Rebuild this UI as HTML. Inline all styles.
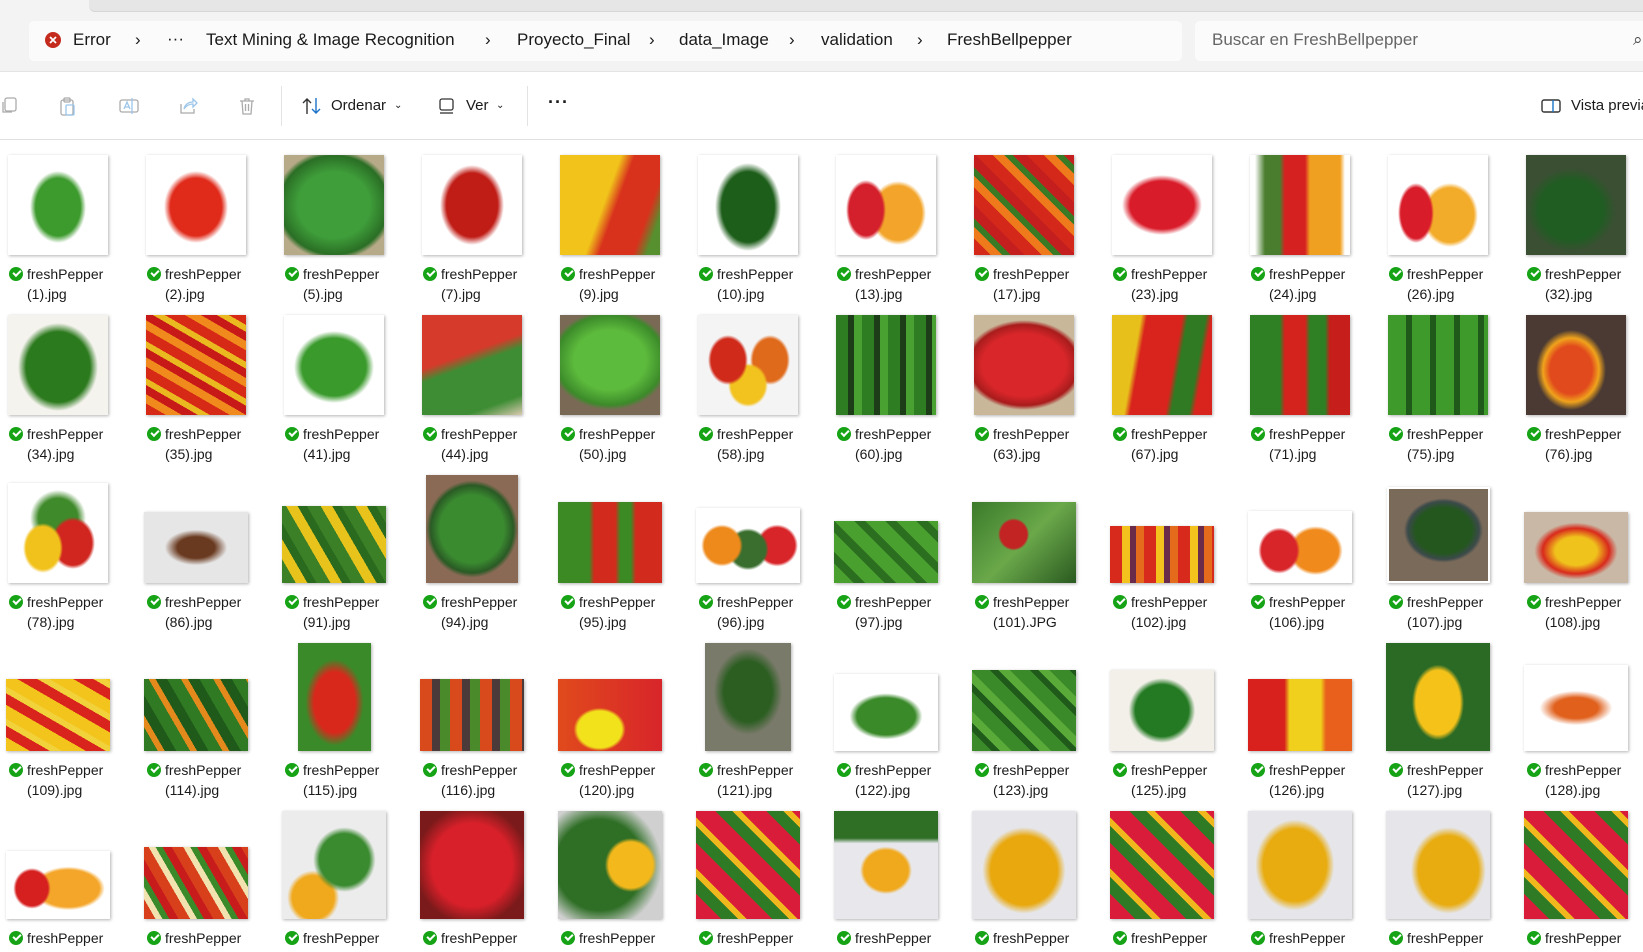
<!DOCTYPE html>
<html><head><meta charset="utf-8">
<style>
*{margin:0;padding:0;box-sizing:border-box}
body{width:1643px;height:952px;overflow:hidden;background:#fff;font-family:"Liberation Sans",sans-serif;color:#1a1a1a;position:relative}
.hdr{position:absolute;left:0;top:0;width:1643px;height:72px;background:#f3f3f3;border-bottom:1px solid #e3e3e3}
.band{position:absolute;left:89px;top:0;width:1560px;height:12px;background:#e6e6e6;border-bottom-left-radius:6px;border-bottom:1px solid #d6d6d6}
.bc{position:absolute;left:29px;top:21px;width:1153px;height:40px;background:#fbfbfb;border-radius:5px}
.sr{position:absolute;left:1195px;top:21px;width:460px;height:40px;background:#fbfbfb;border-radius:5px}
.t{position:absolute;font-size:17px;top:30px;white-space:nowrap}
.tb{position:absolute;left:0;top:72px;width:1643px;height:68px;border-bottom:1px solid #e0e0e0;background:#fff}
.tt{position:absolute;font-size:15px;top:25px;white-space:nowrap}
.sep{position:absolute;top:14px;width:1px;height:40px;background:#e3e3e3}
.grid{position:absolute;left:0;top:0;width:1643px;height:946px;overflow:hidden}
.c{position:absolute;width:104px}
.th{height:108px;display:flex;align-items:flex-end;justify-content:center}
.th i{display:block;box-shadow:1px 1px 3px rgba(0,0,0,.3)}
.c p{font-size:14px;line-height:20px;padding-left:21px;position:relative;margin-top:9px;white-space:nowrap}
.c p:before{content:"";position:absolute;left:3px;top:3px;width:14px;height:14px;border-radius:50%;background:#16a316}
.c p:after{content:"";position:absolute;left:7px;top:6px;width:6px;height:3px;border-left:2px solid #fff;border-bottom:2px solid #fff;transform:rotate(-45deg)}
</style></head><body>
<div class="hdr"><div class="band"></div><div class="bc"></div><div class="sr"></div>
<svg style="position:absolute;left:44px;top:31px" width="18" height="18"><circle cx="9" cy="9" r="8" fill="#c42b1c"/><path d="M6 6l6 6M12 6l-6 6" stroke="#fff" stroke-width="1.8"/></svg>
<span class="t" style="left:73px">Error</span>
<span class="t" style="left:135px">›</span>
<span class="t" style="left:167px;top:29px">···</span>
<span class="t" style="left:206px">Text Mining &amp; Image Recognition</span>
<span class="t" style="left:485px">›</span>
<span class="t" style="left:517px">Proyecto_Final</span>
<span class="t" style="left:649px">›</span>
<span class="t" style="left:679px">data_Image</span>
<span class="t" style="left:789px">›</span>
<span class="t" style="left:821px">validation</span>
<span class="t" style="left:917px">›</span>
<span class="t" style="left:947px">FreshBellpepper</span>
<span class="t" style="left:1212px;color:#666">Buscar en FreshBellpepper</span>
<span class="t" style="left:1633px;color:#444">⌕</span>
</div>
<div class="tb">
<svg style="position:absolute;left:0;top:24px" width="20" height="20" fill="none" stroke="#aaa" stroke-width="1.3"><rect x="5" y="2" width="11" height="13" rx="2"/><path d="M3 6v10h9"/></svg>
<svg style="position:absolute;left:58px;top:24px" width="20" height="20" fill="none" stroke="#aaa" stroke-width="1.3"><rect x="3" y="4" width="12" height="15" rx="2"/><rect x="6" y="2" width="6" height="4" rx="1"/><rect x="8" y="9" width="8" height="10" rx="1" stroke="#9cc6ea"/></svg>
<svg style="position:absolute;left:118px;top:24px" width="22" height="20" fill="none" stroke="#aaa" stroke-width="1.3"><rect x="2" y="4" width="18" height="12" rx="2"/><path d="M6 13l3-7 3 7M7 11h4" stroke="#9cc6ea"/><path d="M14 2v16" stroke="#9cc6ea"/></svg>
<svg style="position:absolute;left:178px;top:24px" width="20" height="20" fill="none" stroke="#aaa" stroke-width="1.3"><path d="M3 8v9h13v-4"/><path d="M6 13c1-5 5-7 9-7V3l4 4-4 4V8c-4 0-7 2-9 5z" stroke="#9cc6ea"/></svg>
<svg style="position:absolute;left:237px;top:24px" width="20" height="20" fill="none" stroke="#aaa" stroke-width="1.3"><path d="M3 5h14M8 5V3h4v2M5 5l1 13h8l1-13M8.5 8v7M11.5 8v7"/></svg>
<div class="sep" style="left:281px"></div>
<svg style="position:absolute;left:301px;top:24px" width="22" height="20" fill="none" stroke-width="1.4"><path d="M6 18V3M2 7l4-4 4 4" stroke="#333"/><path d="M15 2v15M11 13l4 4 4-4" stroke="#1a73c8"/></svg>
<span class="tt" style="left:331px">Ordenar</span>
<span class="tt" style="left:394px;font-size:10px;top:28px">⌄</span>
<svg style="position:absolute;left:438px;top:24px" width="18" height="20" fill="none" stroke="#333" stroke-width="1.3"><rect x="2" y="3" width="13" height="11" rx="2"/><path d="M2 17h13"/></svg>
<span class="tt" style="left:466px">Ver</span>
<span class="tt" style="left:496px;font-size:10px;top:28px">⌄</span>
<div class="sep" style="left:527px"></div>
<span class="tt" style="left:548px;top:20px;font-size:18px;font-weight:bold;letter-spacing:1px">···</span>
<svg style="position:absolute;left:1540px;top:24px" width="22" height="20" fill="none" stroke-width="1.4"><rect x="2" y="4" width="18" height="12" rx="2" stroke="#333"/><path d="M13 4v12" stroke="#1a73c8"/></svg>
<span class="tt" style="left:1571px">Vista previa</span>
</div>

<div class="grid">
<!-- Row 1 -->
<div style="position:absolute;left:0;top:147px">
<div class="c" style="left:6px"><div class="th"><i style="width:100px;height:100px;background:radial-gradient(ellipse 28% 36% at 50% 52%,#3d9a2d 80%,#fff 100%)"></i></div><p>freshPepper<br>(1).jpg</p></div>
<div class="c" style="left:144px"><div class="th"><i style="width:100px;height:100px;background:radial-gradient(ellipse 32% 36% at 50% 52%,#e02a1a 80%,#fff 100%)"></i></div><p>freshPepper<br>(2).jpg</p></div>
<div class="c" style="left:282px"><div class="th"><i style="width:100px;height:100px;background:radial-gradient(ellipse 60% 55% at 50% 50%,#3f9e3a 60%,#2a6e25 90%,#b7aa88 100%)"></i></div><p>freshPepper<br>(5).jpg</p></div>
<div class="c" style="left:420px"><div class="th"><i style="width:100px;height:100px;background:radial-gradient(ellipse 32% 40% at 50% 50%,#c01d17 80%,#fff 100%)"></i></div><p>freshPepper<br>(7).jpg</p></div>
<div class="c" style="left:558px"><div class="th"><i style="width:100px;height:100px;background:linear-gradient(110deg,#f1c31b 0 45%,#d8321d 55% 80%,#56902f 90%)"></i></div><p>freshPepper<br>(9).jpg</p></div>
<div class="c" style="left:696px"><div class="th"><i style="width:100px;height:100px;background:radial-gradient(ellipse 33% 44% at 50% 52%,#1e5e1b 80%,#fff 100%)"></i></div><p>freshPepper<br>(10).jpg</p></div>
<div class="c" style="left:834px"><div class="th"><i style="width:100px;height:100px;background:radial-gradient(ellipse 20% 30% at 30% 55%,#d4202c 85%,transparent 100%),radial-gradient(ellipse 28% 32% at 62% 58%,#f2a52a 85%,#fff 100%)"></i></div><p>freshPepper<br>(13).jpg</p></div>
<div class="c" style="left:972px"><div class="th"><i style="width:100px;height:100px;background:repeating-linear-gradient(45deg,#d4281b 0 12px,#ef7a1c 12px 20px,#3b7a25 20px 26px,#c41e1e 26px 36px)"></i></div><p>freshPepper<br>(17).jpg</p></div>
<div class="c" style="left:1110px"><div class="th"><i style="width:100px;height:100px;background:radial-gradient(ellipse 40% 30% at 50% 50%,#d91c2a 80%,#fff 100%)"></i></div><p>freshPepper<br>(23).jpg</p></div>
<div class="c" style="left:1248px"><div class="th"><i style="width:100px;height:100px;background:linear-gradient(90deg,#fff 5%,#4a7d2e 15% 30%,#d62121 35% 55%,#f0a020 60% 90%,#fff 95%)"></i></div><p>freshPepper<br>(24).jpg</p></div>
<div class="c" style="left:1386px"><div class="th"><i style="width:100px;height:100px;background:radial-gradient(ellipse 18% 30% at 28% 58%,#d91c2a 85%,transparent 100%),radial-gradient(ellipse 28% 32% at 62% 60%,#f3ab2a 85%,#fff 100%)"></i></div><p>freshPepper<br>(26).jpg</p></div>
<div class="c" style="left:1524px"><div class="th"><i style="width:100px;height:100px;background:radial-gradient(ellipse 45% 42% at 45% 55%,#1f5d22 70%,#3b4f33 100%)"></i></div><p>freshPepper<br>(32).jpg</p></div>
</div>
<!-- Row 2 -->
<div style="position:absolute;left:0;top:307px">
<div class="c" style="left:6px"><div class="th"><i style="width:100px;height:100px;background:radial-gradient(ellipse 40% 44% at 50% 52%,#2c7a1e 80%,#f5f3ee 100%)"></i></div><p>freshPepper<br>(34).jpg</p></div>
<div class="c" style="left:144px"><div class="th"><i style="width:100px;height:100px;background:repeating-linear-gradient(30deg,#d62a17 0 10px,#f08a1c 10px 18px,#c81919 18px 26px,#e9b91f 26px 32px)"></i></div><p>freshPepper<br>(35).jpg</p></div>
<div class="c" style="left:282px"><div class="th"><i style="width:100px;height:100px;background:radial-gradient(ellipse 40% 36% at 50% 52%,#3a9a2c 80%,#fff 100%)"></i></div><p>freshPepper<br>(41).jpg</p></div>
<div class="c" style="left:420px"><div class="th"><i style="width:100px;height:100px;background:linear-gradient(160deg,#d63a2a 0 40%,#3e8d34 50% 85%,#d9c9b0 100%)"></i></div><p>freshPepper<br>(44).jpg</p></div>
<div class="c" style="left:558px"><div class="th"><i style="width:100px;height:100px;background:radial-gradient(ellipse 60% 50% at 50% 45%,#5cba3c 60%,#3c8a2a 90%,#7a6a55 100%)"></i></div><p>freshPepper<br>(50).jpg</p></div>
<div class="c" style="left:696px"><div class="th"><i style="width:100px;height:100px;background:radial-gradient(ellipse 20% 25% at 30% 45%,#d02a1a 85%,transparent 100%),radial-gradient(ellipse 20% 22% at 50% 70%,#f2c21e 85%,transparent 100%),radial-gradient(ellipse 20% 25% at 72% 45%,#e06a1c 85%,#f4f4f4 100%)"></i></div><p>freshPepper<br>(58).jpg</p></div>
<div class="c" style="left:834px"><div class="th"><i style="width:100px;height:100px;background:repeating-linear-gradient(90deg,#2e7d22 0 12px,#1c3d17 12px 18px,#49a132 18px 26px)"></i></div><p>freshPepper<br>(60).jpg</p></div>
<div class="c" style="left:972px"><div class="th"><i style="width:100px;height:100px;background:radial-gradient(ellipse 60% 45% at 50% 50%,#d8262a 70%,#a81c1c 90%,#c9b79a 100%)"></i></div><p>freshPepper<br>(63).jpg</p></div>
<div class="c" style="left:1110px"><div class="th"><i style="width:100px;height:100px;background:linear-gradient(100deg,#e8c01c 0 25%,#d8241c 30% 60%,#2f7a22 65% 80%,#d8241c 85%)"></i></div><p>freshPepper<br>(67).jpg</p></div>
<div class="c" style="left:1248px"><div class="th"><i style="width:100px;height:100px;background:linear-gradient(90deg,#2f8025 0 30%,#d3231c 35% 55%,#2f8025 60% 75%,#c61e1a 80%)"></i></div><p>freshPepper<br>(71).jpg</p></div>
<div class="c" style="left:1386px"><div class="th"><i style="width:100px;height:100px;background:repeating-linear-gradient(90deg,#3e9a2a 0 18px,#1f5a1b 18px 24px)"></i></div><p>freshPepper<br>(75).jpg</p></div>
<div class="c" style="left:1524px"><div class="th"><i style="width:100px;height:100px;background:radial-gradient(ellipse 35% 40% at 45% 55%,#e14a1c 60%,#f0a31c 80%,#4a3a33 100%)"></i></div><p>freshPepper<br>(76).jpg</p></div>
</div>
<!-- Row 3 -->
<div style="position:absolute;left:0;top:475px">
<div class="c" style="left:6px"><div class="th"><i style="width:100px;height:100px;background:radial-gradient(ellipse 20% 25% at 35% 65%,#f2c21c 85%,transparent 100%),radial-gradient(ellipse 22% 26% at 65% 60%,#d0261f 85%,transparent 100%),radial-gradient(ellipse 28% 28% at 50% 35%,#3f8a2a 70%,#fff 100%)"></i></div><p>freshPepper<br>(78).jpg</p></div>
<div class="c" style="left:144px"><div class="th"><i style="width:104px;height:71px;background:radial-gradient(ellipse 30% 25% at 50% 50%,#6a3a20 60%,#e6e6e6 100%)"></i></div><p>freshPepper<br>(86).jpg</p></div>
<div class="c" style="left:282px"><div class="th"><i style="width:104px;height:77px;background:repeating-linear-gradient(60deg,#3b7f26 0 12px,#e7c31c 12px 22px,#2a6a1e 22px 30px)"></i></div><p>freshPepper<br>(91).jpg</p></div>
<div class="c" style="left:420px"><div class="th"><i style="width:92px;height:108px;background:radial-gradient(ellipse 50% 45% at 50% 50%,#3a8a30 70%,#2a5a25 90%,#8a6a55 100%)"></i></div><p>freshPepper<br>(94).jpg</p></div>
<div class="c" style="left:558px"><div class="th"><i style="width:104px;height:81px;background:linear-gradient(90deg,#3c8a24 0 30%,#d22a1c 35% 55%,#3c8a24 60% 70%,#d22a1c 75%)"></i></div><p>freshPepper<br>(95).jpg</p></div>
<div class="c" style="left:696px"><div class="th"><i style="width:104px;height:75px;background:radial-gradient(ellipse 20% 28% at 25% 50%,#ee8a1c 85%,transparent 100%),radial-gradient(ellipse 20% 28% at 50% 55%,#3a6e2e 85%,transparent 100%),radial-gradient(ellipse 20% 28% at 78% 50%,#d8252a 85%,#fff 100%)"></i></div><p>freshPepper<br>(96).jpg</p></div>
<div class="c" style="left:834px"><div class="th"><i style="width:104px;height:62px;background:repeating-linear-gradient(45deg,#4aa02e 0 14px,#2c6e20 14px 22px)"></i></div><p>freshPepper<br>(97).jpg</p></div>
<div class="c" style="left:972px"><div class="th"><i style="width:104px;height:81px;background:radial-gradient(ellipse 15% 20% at 40% 40%,#c22424 85%,transparent 100%),linear-gradient(135deg,#3a7a2a,#6aa84a,#2a5a20)"></i></div><p>freshPepper<br>(101).JPG</p></div>
<div class="c" style="left:1110px"><div class="th"><i style="width:104px;height:57px;background:repeating-linear-gradient(90deg,#d82a1c 0 12px,#f4c21c 12px 20px,#6a2a4a 20px 26px,#e46a1c 26px 34px)"></i></div><p>freshPepper<br>(102).jpg</p></div>
<div class="c" style="left:1248px"><div class="th"><i style="width:104px;height:72px;background:radial-gradient(ellipse 20% 32% at 30% 55%,#d8252a 85%,transparent 100%),radial-gradient(ellipse 26% 34% at 65% 55%,#f08a1c 85%,#fff 100%)"></i></div><p>freshPepper<br>(106).jpg</p></div>
<div class="c" style="left:1386px"><div class="th"><i style="width:103px;height:96px;border:2px solid #fff;background:radial-gradient(ellipse 40% 35% at 55% 45%,#23571d 70%,#3b4a4a 90%,#7a6a5a 100%)"></i></div><p>freshPepper<br>(107).jpg</p></div>
<div class="c" style="left:1524px"><div class="th"><i style="width:104px;height:71px;background:radial-gradient(ellipse 40% 40% at 50% 55%,#f0c21c 50%,#d82a1c 80%,#c9b8a5 100%)"></i></div><p>freshPepper<br>(108).jpg</p></div>
</div>
<!-- Row 4 -->
<div style="position:absolute;left:0;top:643px">
<div class="c" style="left:6px"><div class="th"><i style="width:104px;height:72px;background:repeating-linear-gradient(30deg,#f2c41c 0 12px,#d8241c 12px 22px,#f2d23a 22px 28px)"></i></div><p>freshPepper<br>(109).jpg</p></div>
<div class="c" style="left:144px"><div class="th"><i style="width:104px;height:72px;background:repeating-linear-gradient(60deg,#2f7a22 0 12px,#e48a1c 12px 18px,#1f5a1a 18px 28px)"></i></div><p>freshPepper<br>(114).jpg</p></div>
<div class="c" style="left:282px"><div class="th"><i style="width:73px;height:108px;background:radial-gradient(ellipse 40% 40% at 50% 55%,#d8281c 70%,#3a8a2a 100%)"></i></div><p>freshPepper<br>(115).jpg</p></div>
<div class="c" style="left:420px"><div class="th"><i style="width:104px;height:72px;background:repeating-linear-gradient(90deg,#d84a1c 0 12px,#4a3a3a 12px 20px,#4a8a2a 20px 30px)"></i></div><p>freshPepper<br>(116).jpg</p></div>
<div class="c" style="left:558px"><div class="th"><i style="width:104px;height:72px;background:radial-gradient(ellipse 25% 30% at 40% 70%,#f2e21c 85%,transparent 100%),linear-gradient(90deg,#e04a1c,#d8252a)"></i></div><p>freshPepper<br>(120).jpg</p></div>
<div class="c" style="left:696px"><div class="th"><i style="width:86px;height:108px;background:radial-gradient(ellipse 40% 40% at 50% 45%,#2c5e22 70%,#7a7a6a 100%)"></i></div><p>freshPepper<br>(121).jpg</p></div>
<div class="c" style="left:834px"><div class="th"><i style="width:104px;height:77px;background:radial-gradient(ellipse 35% 30% at 50% 55%,#3a8a2a 80%,#fff 100%)"></i></div><p>freshPepper<br>(122).jpg</p></div>
<div class="c" style="left:972px"><div class="th"><i style="width:104px;height:81px;background:repeating-linear-gradient(45deg,#3a8a2a 0 14px,#1f5a1a 14px 20px,#5aaa3a 20px 28px)"></i></div><p>freshPepper<br>(123).jpg</p></div>
<div class="c" style="left:1110px"><div class="th"><i style="width:104px;height:81px;background:radial-gradient(ellipse 32% 40% at 50% 50%,#237a22 80%,#f3f0ea 100%)"></i></div><p>freshPepper<br>(125).jpg</p></div>
<div class="c" style="left:1248px"><div class="th"><i style="width:104px;height:72px;background:linear-gradient(90deg,#d8201c 0 35%,#f0d01c 40% 70%,#e8601c 75%)"></i></div><p>freshPepper<br>(126).jpg</p></div>
<div class="c" style="left:1386px"><div class="th"><i style="width:104px;height:108px;background:radial-gradient(ellipse 25% 35% at 50% 55%,#f5c21a 85%,#2a6a25 100%)"></i></div><p>freshPepper<br>(127).jpg</p></div>
<div class="c" style="left:1524px"><div class="th"><i style="width:104px;height:86px;background:radial-gradient(ellipse 35% 20% at 50% 50%,#e0601c 60%,#fff 100%)"></i></div><p>freshPepper<br>(128).jpg</p></div>
</div>
<!-- Row 5 -->
<div style="position:absolute;left:0;top:811px">
<div class="c" style="left:6px"><div class="th"><i style="width:104px;height:68px;background:radial-gradient(ellipse 18% 30% at 25% 55%,#d62020 85%,transparent 100%),radial-gradient(ellipse 35% 32% at 60% 55%,#f4a62a 85%,#fff 100%)"></i></div><p>freshPepper<br>(129).jpg</p></div>
<div class="c" style="left:144px"><div class="th"><i style="width:104px;height:72px;background:repeating-linear-gradient(60deg,#d8401c 0 10px,#f2e2b0 10px 16px,#3a8a2a 16px 22px,#c81c1c 22px 30px)"></i></div><p>freshPepper<br>(130).jpg</p></div>
<div class="c" style="left:282px"><div class="th"><i style="width:104px;height:108px;background:radial-gradient(ellipse 30% 30% at 60% 45%,#3a8a30 80%,transparent 100%),radial-gradient(ellipse 25% 25% at 30% 80%,#f0a81c 80%,#ececec 100%)"></i></div><p>freshPepper<br>(131).jpg</p></div>
<div class="c" style="left:420px"><div class="th"><i style="width:104px;height:108px;background:radial-gradient(ellipse 55% 55% at 50% 50%,#d8202a 70%,#7a1a1a 100%)"></i></div><p>freshPepper<br>(132).jpg</p></div>
<div class="c" style="left:558px"><div class="th"><i style="width:104px;height:108px;background:radial-gradient(ellipse 25% 25% at 70% 50%,#f2b81c 85%,transparent 100%),radial-gradient(ellipse 60% 60% at 40% 50%,#2e6e25 70%,#d0d0d0 100%)"></i></div><p>freshPepper<br>(133).jpg</p></div>
<div class="c" style="left:696px"><div class="th"><i style="width:104px;height:108px;background:repeating-linear-gradient(45deg,#d81c3a 0 18px,#2e7a25 18px 30px,#f0b81c 30px 36px)"></i></div><p>freshPepper<br>(134).jpg</p></div>
<div class="c" style="left:834px"><div class="th"><i style="width:104px;height:108px;background:radial-gradient(ellipse 25% 22% at 50% 55%,#f0a81c 85%,transparent 100%),linear-gradient(180deg,#2e6e25 0 25%,#e8e8ec 30%)"></i></div><p>freshPepper<br>(135).jpg</p></div>
<div class="c" style="left:972px"><div class="th"><i style="width:104px;height:108px;background:radial-gradient(ellipse 40% 40% at 50% 55%,#e8a80e 80%,#e6e6ea 100%)"></i></div><p>freshPepper<br>(136).jpg</p></div>
<div class="c" style="left:1110px"><div class="th"><i style="width:104px;height:108px;background:repeating-linear-gradient(45deg,#d81c3a 0 18px,#2e7a25 18px 30px,#f0b81c 30px 36px)"></i></div><p>freshPepper<br>(137).jpg</p></div>
<div class="c" style="left:1248px"><div class="th"><i style="width:104px;height:108px;background:radial-gradient(ellipse 38% 42% at 45% 50%,#e8ac10 80%,#e6e6ea 100%)"></i></div><p>freshPepper<br>(138).jpg</p></div>
<div class="c" style="left:1386px"><div class="th"><i style="width:104px;height:108px;background:radial-gradient(ellipse 36% 40% at 60% 55%,#e8ac10 80%,#e6e6ea 100%)"></i></div><p>freshPepper<br>(139).jpg</p></div>
<div class="c" style="left:1524px"><div class="th"><i style="width:104px;height:108px;background:repeating-linear-gradient(45deg,#d81c3a 0 18px,#2e7a25 18px 30px,#f0b81c 30px 36px)"></i></div><p>freshPepper<br>(140).jpg</p></div>
</div>
</div>
</body></html>
